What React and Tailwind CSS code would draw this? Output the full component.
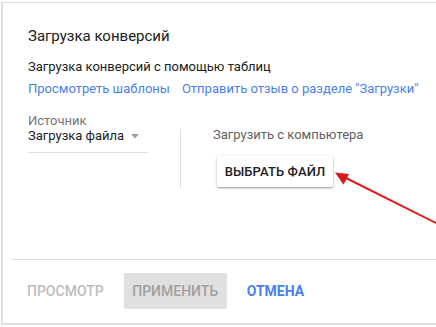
import React from "react";

export default function App() {
  const font = { fontFamily: "Roboto, 'Noto Sans', Arial, sans-serif" };
  return (
    <div className="relative w-[436px] h-[327px] bg-white overflow-hidden pl-[1px] pt-[2px]" style={font}>
      <div className="flex flex-col h-[323px] border-l-2 border-t border-b-2 border-[#e0e0e0] bg-white">
        <div className="pl-[25px] pt-[23px]">
          <div className="text-[15px] leading-[20px] text-[#212121]">Загрузка конверсий</div>
          <div className="mt-[13px] text-[13px] leading-[16px] text-[#212121]">
            Загрузка конверсий с помощью таблиц
          </div>
          <div className="mt-[6px] flex text-[13px] leading-[16px] text-[#4a7fe8]">
            <span>Просмотреть шаблоны</span>
            <span className="ml-[12px]">Отправить отзыв о разделе "Загрузки"</span>
          </div>
          <div className="mt-[17px] flex items-start">
            <div className="w-[120px] border-b border-[#e0e0e0] pb-[8px]">
              <div className="text-[13px] leading-[14px] text-[#757575]">Источник</div>
              <div className="flex items-center text-[13px] leading-[16px] text-[#212121]">
                <span>Загрузка файла</span>
                <svg className="ml-[7px] mt-[1px]" width="8" height="5" viewBox="0 0 8 5">
                  <polygon points="0,0 8,0 4,4.5" fill="#9e9e9e" />
                </svg>
              </div>
            </div>
            <div className="ml-[32px] mt-[15px] w-px h-[59px] bg-[#e0e0e0]" />
            <div className="ml-[32px] mt-[13px] flex flex-col items-start">
              <div className="text-[13px] leading-[16px] text-[#616161]">Загрузить с компьютера</div>
              <div className="ml-[4px] mt-[13px] h-[31px] w-[116px] flex items-center justify-center bg-white rounded-[2px] shadow-[0_1px_3px_rgba(0,0,0,0.3),0_1px_1px_rgba(0,0,0,0.14)] text-[13px] font-medium text-[#212121] tracking-[0.1px]">
                ВЫБРАТЬ ФАЙЛ
              </div>
            </div>
          </div>
        </div>
        <div className="mt-auto ml-[9px] border-t border-[#e0e0e0] h-[64px] pl-[7px] pt-[13px]">
          <div className="flex items-center gap-3">
            <div className="h-[36px] px-2 flex items-center text-[14px] font-medium text-[#bdbdbd]">ПРОСМОТР</div>
            <div className="h-[36px] w-[103px] flex items-center justify-center rounded-[2px] bg-[#e0e0e0] text-[14px] font-medium text-[#a0a0a0]">ПРИМЕНИТЬ</div>
            <div className="h-[36px] px-2 flex items-center text-[14px] font-bold text-[#4a7fe8]">ОТМЕНА</div>
          </div>
        </div>
      </div>
      <svg className="absolute left-0 top-0 pointer-events-none" width="436" height="327" viewBox="0 0 436 327">
        <line x1="442" y1="226" x2="343" y2="176.5" stroke="#d91a1a" strokeWidth="2" />
        <polygon points="335,172.5 349,174 343.5,184.8" fill="#d91a1a" />
      </svg>
    </div>
  );
}
